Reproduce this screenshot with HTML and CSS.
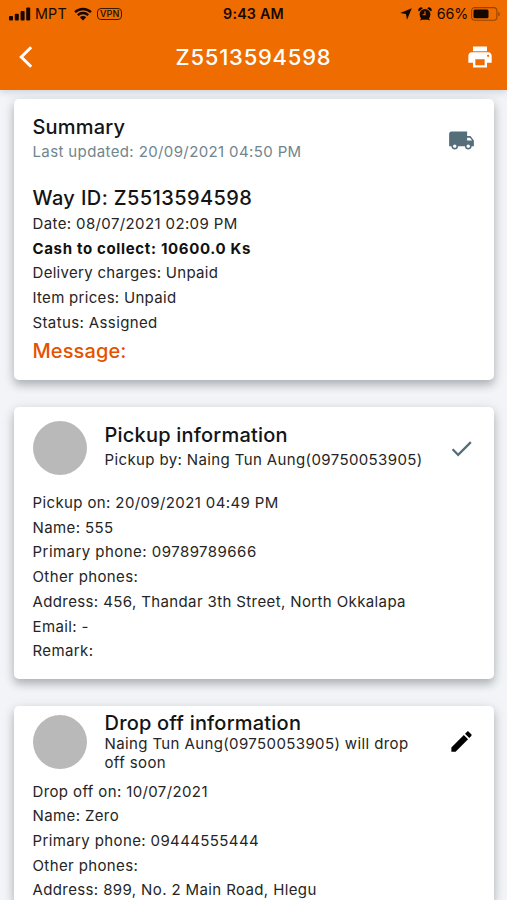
FILE: index.html
```html
<!DOCTYPE html>
<html lang="en">
<head>
<meta charset="utf-8">
<title>Z5513594598</title>
<link rel="stylesheet" href="styles.css">
</head>
<body>
<header class="top">
  <div class="status">
    <div class="status-left">
      <svg class="signal" viewBox="0 0 22 14" width="22" height="14"><rect x="0" y="9" width="4" height="4.5" rx="1"/><rect x="5.8" y="6.8" width="4" height="6.7" rx="1"/><rect x="11.6" y="4" width="4" height="9.5" rx="1"/><rect x="17.2" y="0.5" width="4" height="13" rx="1"/></svg>
      <span class="carrier">MPT</span>
      <svg class="wifi" viewBox="0 0 18 14" width="18" height="14"><path d="M1 5.2a11.6 11.6 0 0 1 16 0M3.8 8.1a7.5 7.5 0 0 1 10.4 0" fill="none" stroke="#160800" stroke-width="2.3"/><path d="M5.8 10.3a4.6 4.6 0 0 1 6.4 0L9 13.6z"/></svg>
      <span class="vpn">VPN</span>
    </div>
    <span class="time">9:43 AM</span>
    <div class="status-right">
      <svg viewBox="0 0 12 12" width="12" height="12"><path d="M11.8.2 7 11.8 5.9 6.1.2 5z"/></svg>
      <svg class="alarm" viewBox="0 0 14 14" width="14" height="14"><circle cx="7" cy="7.4" r="5.4"/><path d="M1 4.6a2.5 2.5 0 0 1 3.8-3.3zM13 4.6a2.5 2.5 0 0 0-3.8-3.3zM2 13.5l1.8-4 2.5 2.5zM12 13.5l-1.8-4-2.5 2.5z"/><path d="M7 4.2v3.5H4.6" fill="none" stroke="#ef6c00" stroke-width="1.1"/></svg>
      <span class="percent">66%</span>
      <svg class="battery" viewBox="0 0 30 14" width="30" height="14"><rect x=".6" y=".6" width="25.3" height="12.6" rx="3.2" fill="none" stroke="#954400" stroke-width="1.1"/><rect x="2.5" y="2.5" width="15" height="8.8" rx="1.5"/><path d="M27.3 4.7v4.6c2-.8 2-3.8 0-4.6z" fill="#954400"/></svg>
    </div>
  </div>
  <div class="bar">
    <svg class="back" viewBox="0 0 14 24" width="14" height="24"><path d="M12.2 2.3 2.3 12l9.9 9.7" fill="none" stroke="#fff" stroke-width="3"/></svg>
    <h1>Z5513594598</h1>
    <svg class="print" viewBox="0 0 24 24" width="28" height="28"><path d="M19 8H5c-1.66 0-3 1.34-3 3v6h4v4h12v-4h4v-6c0-1.66-1.34-3-3-3zm-3 11H8v-5h8v5zm3-7c-.55 0-1-.45-1-1s.45-1 1-1 1 .45 1 1-.45 1-1 1zm-1-9H6v4h12V3z"/></svg>
  </div>
</header>
<main>
  <section class="card summary">
    <div class="head">
      <div class="head-text">
        <h2>Summary</h2>
        <p class="updated">Last updated: 20/09/2021 04:50 PM</p>
      </div>
      <svg class="icon slate" viewBox="0 0 24 24" width="27" height="27"><path d="M20 8h-3V4H3c-1.1 0-2 .9-2 2v11h2c0 1.66 1.34 3 3 3s3-1.34 3-3h6c0 1.66 1.34 3 3 3s3-1.34 3-3h2v-5l-3-4zM6 18.5c-.83 0-1.5-.67-1.5-1.5s.67-1.5 1.5-1.5 1.5.67 1.5 1.5-.67 1.5-1.5 1.5zm13.5-9 1.96 2.5H17V9.5h2.5zm-1.5 9c-.83 0-1.5-.67-1.5-1.5s.67-1.5 1.5-1.5 1.5.67 1.5 1.5-.67 1.5-1.5 1.5z"/></svg>
    </div>
    <h3>Way ID: Z5513594598</h3>
    <div class="rows">
      <p>Date: 08/07/2021 02:09 PM</p>
      <p class="cash">Cash to collect: 10600.0 Ks</p>
      <p class="plain">Delivery charges: Unpaid</p>
      <p class="plain">Item prices: Unpaid</p>
      <p>Status: Assigned</p>
    </div>
    <p class="message">Message:</p>
  </section>
  <section class="card pickup">
    <div class="head">
      <div class="avatar"></div>
      <div class="head-text">
        <h2>Pickup information</h2>
        <p>Pickup by: Naing Tun Aung(09750053905)</p>
      </div>
      <svg class="icon slate" viewBox="0 0 24 24" width="27" height="27"><path d="M9 16.17 4.83 12l-1.42 1.41L9 19 21 7l-1.41-1.41z"/></svg>
    </div>
    <div class="rows">
      <p>Pickup on: 20/09/2021 04:49 PM</p>
      <p>Name: 555</p>
      <p class="phone">Primary phone: 09789789666</p>
      <p>Other phones:</p>
      <p>Address: 456, Thandar 3th Street, North Okkalapa</p>
      <p>Email: -</p>
      <p>Remark:</p>
    </div>
  </section>
  <section class="card dropoff">
    <div class="head">
      <div class="avatar"></div>
      <div class="head-text">
        <h2>Drop off information</h2>
        <p>Naing Tun Aung(09750053905) will drop<br>off soon</p>
      </div>
      <svg class="icon" viewBox="0 0 24 24" width="27" height="27"><path d="M3 17.25V21h3.75L17.81 9.94l-3.75-3.75L3 17.25zM20.71 7.04c.39-.39.39-1.02 0-1.41l-2.34-2.34c-.39-.39-1.02-.39-1.41 0l-1.83 1.83 3.75 3.75 1.83-1.83z"/></svg>
    </div>
    <div class="rows">
      <p>Drop off on: 10/07/2021</p>
      <p>Name: Zero</p>
      <p>Primary phone: 09444555444</p>
      <p>Other phones:</p>
      <p>Address: 899, No. 2 Main Road, Hlegu</p>
    </div>
  </section>
</main>
</body>
</html>
```
FILE: styles.css
```css
* { box-sizing: border-box; }
body {
  margin: 0;
  height: 900px;
  overflow: hidden;
  background: #f2f4f7;
  color: #252525;
  font: 15px/24.7px Inter, "Liberation Sans", sans-serif;
  letter-spacing: 0.38px;
}
h1, h2, h3, p { margin: 0; font-weight: 400; }
svg { display: block; flex: none; }

.top {
  position: relative;
  height: 89.5px;
  background: #ef6c00;
  box-shadow: 0 2px 7px rgba(40, 60, 90, 0.18);
}
.status {
  display: grid;
  grid-template-columns: 1fr auto 1fr;
  align-items: center;
  height: 27px;
  padding: 0 6px 0 9px;
  color: #160800;
  fill: #160800;
  font-size: 14.3px;
  line-height: 27px;
  letter-spacing: 0.2px;
}
.status-left, .status-right { display: flex; align-items: center; }
.status-right { justify-content: flex-end; }
.carrier { margin: 0 7px 0 4px; }
.vpn {
  margin-left: 5px;
  padding: 0 2px;
  border: 1px solid #3d1b00;
  border-radius: 4px;
  font-size: 9px;
  font-weight: 500;
  line-height: 10px;
}
.time { margin-right: 3px; font-weight: 600; }
.alarm { margin: 0 5px 0 6px; }
.battery { margin-left: 3px; }
.percent { letter-spacing: -0.2px; }
.bar {
  display: grid;
  grid-template-columns: 60px 1fr 60px;
  align-items: center;
  height: 60px;
}
.back { margin-left: 19px; }
.bar h1 {
  color: #fff;
  font-size: 22px;
  font-weight: 500;
  letter-spacing: 0.76px;
  text-align: center;
}
.print { fill: #fff; justify-self: end; margin-right: 13px; }

main {
  display: flex;
  flex-direction: column;
  gap: 27px;
  padding: 9.5px 13.5px 0 14px;
}
.card {
  flex: none;
  padding: 0 18px 0 18.5px;
  border-radius: 5px;
  background: #fff;
  box-shadow: 0 5px 8px rgba(60, 66, 72, 0.32), 0 2px 14px rgba(60, 66, 72, 0.1);
}
.summary { height: 281px; }
.pickup { height: 272px; }
.dropoff { height: 194px; border-radius: 5px 5px 0 0; }
.head { display: flex; align-items: center; }
.head-text { flex: 1; }
.summary .head { height: 82px; }
.summary .head-text { padding-bottom: 2px; }
.summary .icon { margin-right: 1px; }
.pickup .head { height: 84px; padding-bottom: 2px; }
.dropoff .head { height: 73.5px; padding-bottom: 2px; }
.avatar {
  flex: none;
  width: 54px;
  height: 54px;
  margin-right: 18px;
  border-radius: 50%;
  background: #b9b9b9;
}
.icon { fill: #000; margin-right: 1px; }
.slate { fill: #546e7a; }
h2, h3 {
  color: #141414;
  font-size: 20px;
  font-weight: 500;
  line-height: 25px;
}
h2 { letter-spacing: 0.2px; }
.updated { color: #71858e; line-height: 23px; }
h3 { height: 31px; line-height: 35px; letter-spacing: 0.4px; }
.cash { color: #111; font-weight: 700; letter-spacing: 0.66px; }
.plain { letter-spacing: 0.3px; }
.phone { letter-spacing: 0.46px; }
.message {
  color: #e65100;
  font-size: 20px;
  font-weight: 500;
  line-height: 31px;
  letter-spacing: 0.1px;
}
.dropoff h2 { line-height: 22px; }
.dropoff .head p { line-height: 19px; }
```
